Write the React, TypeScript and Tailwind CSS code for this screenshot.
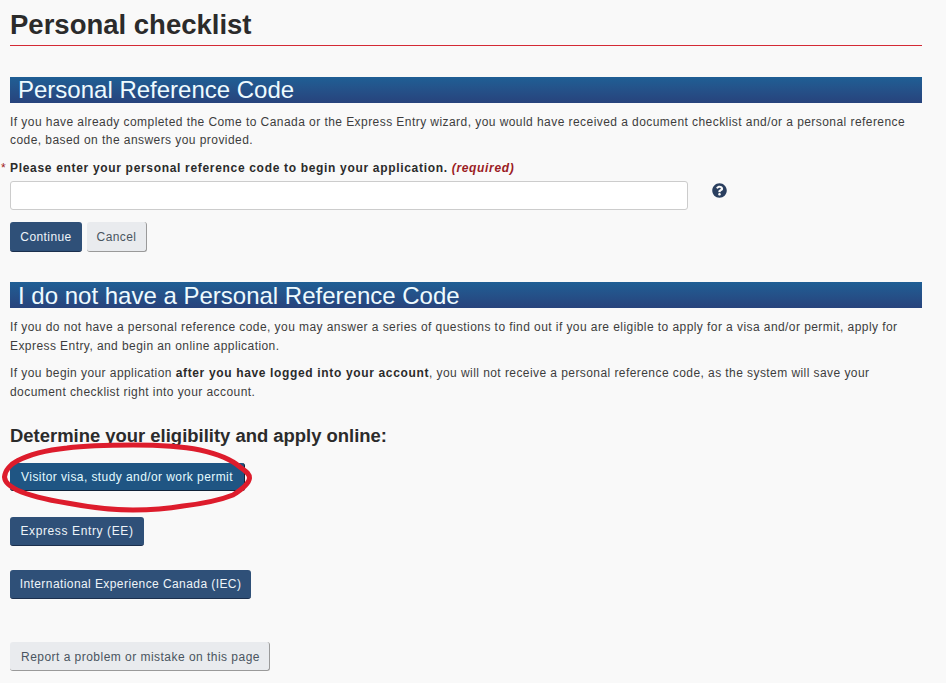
import { FaQuestionCircle } from 'react-icons/fa';

function SectionBar({ children, className }: { children: React.ReactNode; className: string }) {
  return (
    <h2 className={`h-[26px] bg-gradient-to-b from-[#1f5f95] to-[#27437c] pl-[8px] text-[24px] font-normal text-[#eefbff] ${className}`}>
      {children}
    </h2>
  );
}

function PrimaryButton({ children, className }: { children: React.ReactNode; className: string }) {
  return (
    <button className={`block rounded-[3px] border-b border-[#1b2f4d] bg-[#2f5078] text-center text-[12px] tracking-[0.42px] text-[#eef4f8] ${className}`}>
      {children}
    </button>
  );
}

export default function App() {
  return (
    <div className="relative h-[683px] w-[946px] overflow-hidden bg-[#f9f9f9] font-['Liberation_Sans',Arial,sans-serif] text-[#3d3d3d]">
      <div className="w-[922px] pl-[10px]">
        <h1 className="h-[45px] pt-[9px] text-[27.5px] leading-[32px] font-bold text-[#2b2b2b]">
          Personal checklist
        </h1>
        <div className="h-px bg-[#d42a35]" />

        <div className="mt-[31px]">
          <SectionBar className="leading-[26px]">Personal Reference Code</SectionBar>
        </div>
        <p className="mt-[10px] text-[12px] leading-[18px] tracking-[0.44px]">
          If you have already completed the Come to Canada or the Express Entry wizard, you would have received a document checklist and/or a personal reference code, based on the answers you provided.
        </p>

        <label className="relative mt-[10px] block text-[12px] leading-[18px] font-bold tracking-[0.68px] text-[#2b2b2b]">
          <span className="absolute left-[-9px] font-normal text-[#a02020]">*</span>
          Please enter your personal reference code to begin your application.{' '}
          <em className="text-[#9b1c24]">(required)</em>
        </label>

        <div className="mt-[4px] flex items-start">
          <input className="h-[29px] w-[678px] rounded-[3px] border border-[#cccccc] bg-white" />
          <FaQuestionCircle className="mt-[2px] ml-[24px] h-[15px] w-[15px] text-[#2a3f5f]" />
        </div>

        <div className="mt-[12px] flex gap-[5px]">
          <PrimaryButton className="h-[30px] w-[72px]">Continue</PrimaryButton>
          <button className="h-[30px] w-[60px] rounded-[3px] border-r border-b border-[#9a9a9a] bg-[#e9ebee] text-center text-[12px] tracking-[0.42px] text-[#4a5560]">
            Cancel
          </button>
        </div>

        <div className="mt-[30px]">
          <SectionBar className="leading-[28px]">I do not have a Personal Reference Code</SectionBar>
        </div>
        <p className="mt-[10px] text-[12px] leading-[19px] tracking-[0.43px]">
          If you do not have a personal reference code, you may answer a series of questions to find out if you are eligible to apply for a visa and/or permit, apply for Express Entry, and begin an online application.
        </p>
        <p className="mt-[8px] text-[12px] leading-[19px] tracking-[0.43px]">
          If you begin your application <strong className="tracking-[0.65px] text-[#2b2b2b]">after you have logged into your account</strong>, you will not receive a personal reference code, as the system will save your document checklist right into your account.
        </p>

        <h3 className="mt-[23px] text-[18.45px] leading-[22px] font-bold text-[#2b2b2b]">
          Determine your eligibility and apply online:
        </h3>

        <PrimaryButton className="mt-[16px] h-[28px] w-[235px] border-r !border-[#0f2238] !bg-[#1f5583] pt-px !text-[#e4fbff]">
          Visitor visa, study and/or work permit
        </PrimaryButton>
        <PrimaryButton className="mt-[26px] h-[29px] w-[134px] !tracking-[0.62px]">Express Entry (EE)</PrimaryButton>
        <PrimaryButton className="mt-[24px] h-[29px] w-[241px]">International Experience Canada (IEC)</PrimaryButton>

        <button className="mt-[43px] block h-[29px] w-[260px] rounded-[3px] border-r border-b border-[#9a9a9a] bg-[#e9ebee] pt-px pl-[2px] text-center text-[12px] tracking-[0.47px] text-[#4a5560]">
          Report a problem or mistake on this page
        </button>
      </div>

      {/* hand drawn circle over the first button */}
      <svg className="pointer-events-none absolute top-[440px] left-0" width="260" height="76" viewBox="0 0 260 76" fill="none">
        <path
          d="M4.5 37C5 30 11 24 17 21C32 13 48 10 67 8C90 5 110 5 133 5C158 5 180 6 200 10C218 14 232 20 240 27C245 31 249.5 33 249.5 38C249 44 241 50 233 55C218 61 200 64 183 66C166 69 150 70 133 70C110 70 88 67 67 63C48 60 30 56 17 50C10 46 5 43 4.5 37Z"
          stroke="#dd1c2c"
          strokeWidth="5"
        />
      </svg>
    </div>
  );
}
